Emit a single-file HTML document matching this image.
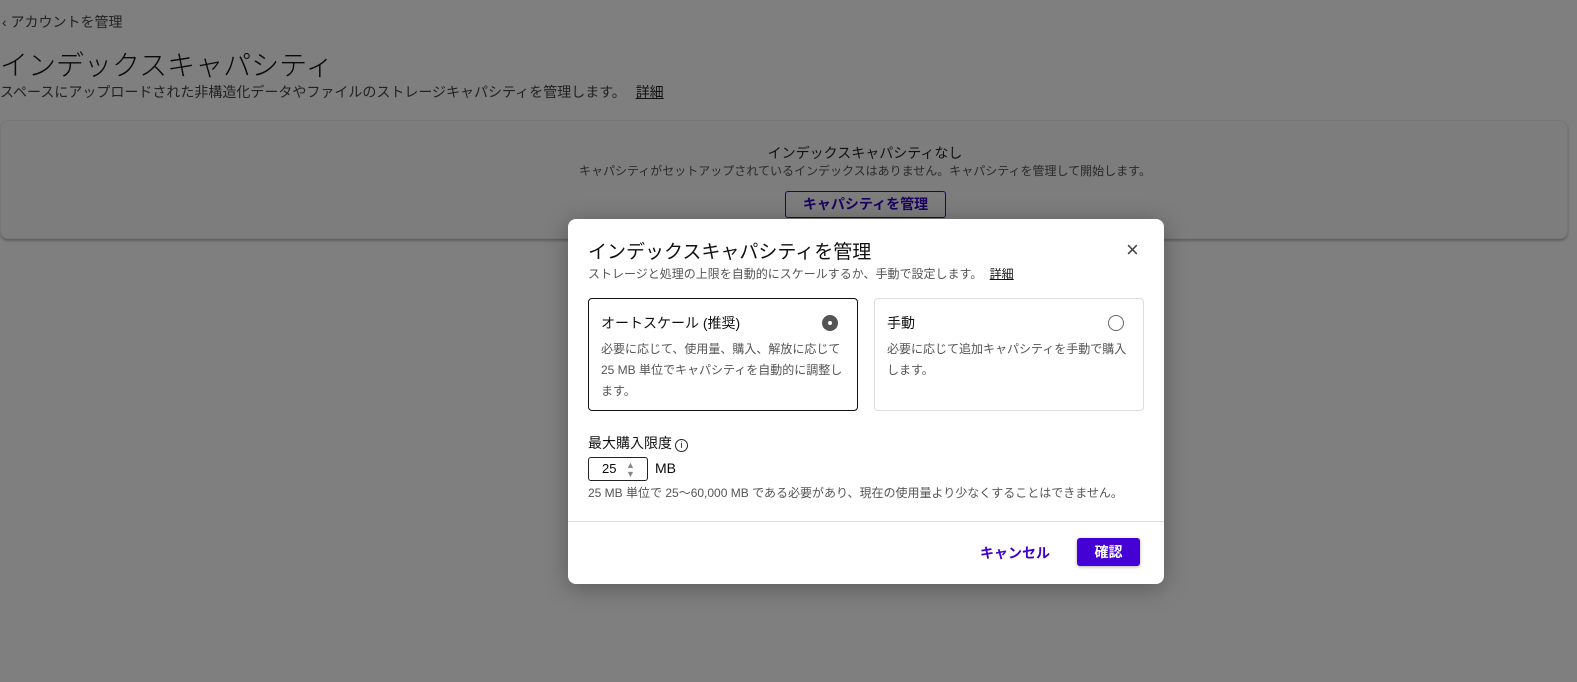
<!DOCTYPE html>
<html><head><meta charset="utf-8"><style>
*{box-sizing:border-box;margin:0;padding:0}
body{width:1577px;height:682px;background:#7f7f7f;font-family:"Liberation Sans","Noto Sans CJK JP",sans-serif;position:relative;overflow:hidden;color:#0a0a0a}
.abs{position:absolute;white-space:nowrap}
.card{position:absolute;left:0;top:120px;width:1568px;height:119px;background:#7d7d7d;border:1px solid #767676;border-radius:8px;box-shadow:0 2px 2px rgba(0,0,0,.25)}
.modal{position:absolute;left:568px;top:219px;width:596px;height:365px;background:#fff;border-radius:8px;box-shadow:0 4px 24px rgba(0,0,0,.3)}
.opt{position:absolute;top:79px;width:270px;height:113px;border-radius:4px;padding:14px 12px}
.opt .t{font-size:14px;color:#111}
.opt .d{font-size:12px;color:#555;line-height:21px;margin-top:6px;white-space:normal}
.radio{position:absolute;right:19px;top:16px;width:16px;height:16px;border-radius:50%}
</style></head><body>
<div class="abs" style="left:2px;top:12px;font-size:14px;color:#222">&lsaquo; アカウントを管理</div>
<div class="abs" style="left:0;top:44px;font-size:28px;color:#0a0a0a;font-weight:300">インデックスキャパシティ</div>
<div class="abs" style="left:0;top:82px;font-size:14px;color:#222">スペースにアップロードされた非構造化データやファイルのストレージキャパシティを管理します。 <span style="text-decoration:underline;color:#111;margin-left:6px">詳細</span></div>
<div class="card"></div>
<div class="abs" style="left:0;width:1730px;text-align:center;top:143px;font-size:14px;color:#111">インデックスキャパシティなし</div>
<div class="abs" style="left:0;width:1730px;text-align:center;top:162px;font-size:12px;color:#2a2a2a">キャパシティがセットアップされているインデックスはありません。キャパシティを管理して開始します。</div>
<div class="abs" style="left:785px;top:191px;width:161px;height:27px;border:1px solid #220070;border-radius:3px;font-size:14px;font-weight:bold;color:#1a0060;text-align:center;line-height:25px">キャパシティを管理</div>
<div class="modal">
 <div class="abs" style="left:20px;top:18px;font-size:19px;color:#111">インデックスキャパシティを管理</div>
 <div class="abs" style="left:558px;top:20px;font-size:22px;color:#444;line-height:22px">×</div>
 <div class="abs" style="left:20px;top:46px;font-size:12px;color:#555">ストレージと処理の上限を自動的にスケールするか、手動で設定します。 <span style="text-decoration:underline;color:#111;margin-left:4px">詳細</span></div>
 <div class="opt" style="left:20px;border:1px solid #111">
  <div class="t">オートスケール (推奨)</div>
  <div class="radio" style="background:#555"><div style="position:absolute;left:6px;top:6px;width:4px;height:4px;border-radius:50%;background:#fff"></div></div>
  <div class="d">必要に応じて、使用量、購入、解放に応じて 25 MB 単位でキャパシティを自動的に調整します。</div>
 </div>
 <div class="opt" style="left:306px;border:1px solid #ddd">
  <div class="t">手動</div>
  <div class="radio" style="border:1px solid #666"></div>
  <div class="d">必要に応じて追加キャパシティを手動で購入します。</div>
 </div>
 <div class="abs" style="left:20px;top:214px;font-size:14px;color:#111">最大購入限度<span style="display:inline-block;margin-left:3px;width:13px;height:13px;border:1.3px solid #222;border-radius:50%;font-size:9px;text-align:center;line-height:11px;vertical-align:0px">i</span></div>
 <div class="abs" style="left:20px;top:238px;width:60px;height:24px;border:1px solid #222;border-radius:3px;font-size:13px;line-height:22px;padding-left:13px">25<span style="position:absolute;left:37px;top:3px;font-size:9px;line-height:9px;color:#888">▲<br>▼</span></div>
 <div class="abs" style="left:87px;top:241px;font-size:14px">MB</div>
 <div class="abs" style="left:20px;top:265px;font-size:12px;color:#555">25 MB 単位で 25〜60,000 MB である必要があり、現在の使用量より少なくすることはできません。</div>
 <div style="position:absolute;left:0;top:302px;width:596px;height:1px;background:#ddd"></div>
 <div class="abs" style="left:412px;top:324px;font-size:14px;font-weight:bold;color:#4000d0">キャンセル</div>
 <div class="abs" style="left:509px;top:319px;width:63px;height:28px;background:#4500d6;border-radius:3px;color:#fff;font-size:14px;font-weight:bold;text-align:center;line-height:28px;box-shadow:0 1px 3px rgba(0,0,0,.3)">確認</div>
</div>
</body></html>
